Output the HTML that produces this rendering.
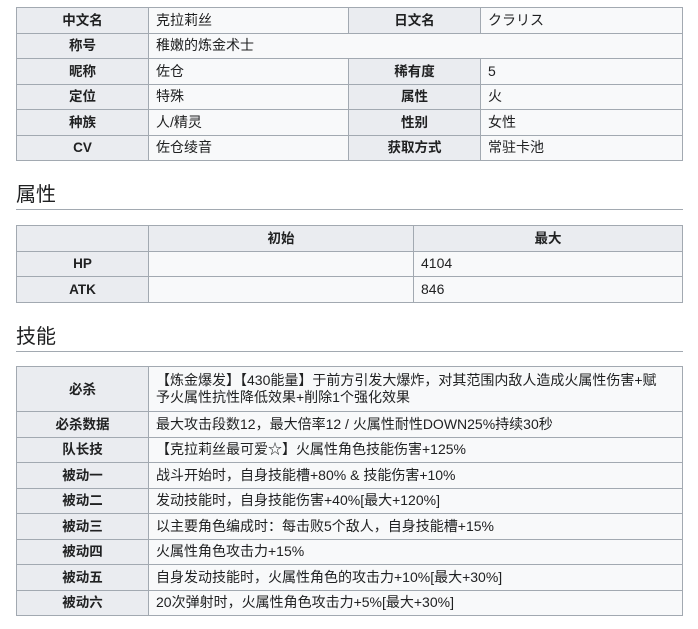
<!DOCTYPE html>
<html><head><meta charset="utf-8"><style>
body{margin:0;background:#fff;font-family:"Liberation Sans","Noto Sans CJK SC",sans-serif;font-size:14px;color:#202122;}
table{position:absolute;left:16px;width:667px;border-collapse:collapse;table-layout:fixed;background:#f8f9fa;}
td,th{border:1px solid #a2a9b1;padding:0 7px;height:24.5px;line-height:17px;}
th{background:#eaecf0;font-weight:bold;text-align:center;font-size:13.5px;}
h2{position:absolute;left:16px;width:667px;margin:0;font-weight:normal;font-size:20px;border-bottom:1px solid #a2a9b1;height:26px;line-height:24px;}
</style></head><body>
<table style="top:7px">
<colgroup><col style="width:132px"><col style="width:200px"><col style="width:132px"><col></colgroup>
<tr><th>中文名</th><td>克拉莉丝</td><th>日文名</th><td>クラリス</td></tr>
<tr><th>称号</th><td colspan="3">稚嫩的炼金术士</td></tr>
<tr><th>昵称</th><td>佐仓</td><th>稀有度</th><td>5</td></tr>
<tr><th>定位</th><td>特殊</td><th>属性</th><td>火</td></tr>
<tr><th>种族</th><td>人/精灵</td><th>性别</th><td>女性</td></tr>
<tr><th>CV</th><td>佐仓绫音</td><th>获取方式</th><td>常驻卡池</td></tr>
</table>
<h2 style="top:183px">属性</h2>
<table style="top:225px">
<colgroup><col style="width:132px"><col style="width:265px"><col></colgroup>
<tr><th></th><th>初始</th><th>最大</th></tr>
<tr><th>HP</th><td></td><td>4104</td></tr>
<tr><th>ATK</th><td></td><td>846</td></tr>
</table>
<h2 style="top:325px">技能</h2>
<table style="top:366px">
<colgroup><col style="width:132px"><col></colgroup>
<tr><th style="height:44px">必杀</th><td>【炼金爆发】【430能量】于前方引发大爆炸，对其范围内敌人造成火属性伤害+赋<br>予火属性抗性降低效果+削除1个强化效果</td></tr>
<tr><th>必杀数据</th><td>最大攻击段数12，最大倍率12 / 火属性耐性DOWN25%持续30秒</td></tr>
<tr><th>队长技</th><td>【克拉莉丝最可爱☆】火属性角色技能伤害+125%</td></tr>
<tr><th>被动一</th><td>战斗开始时，自身技能槽+80% &amp; 技能伤害+10%</td></tr>
<tr><th>被动二</th><td>发动技能时，自身技能伤害+40%[最大+120%]</td></tr>
<tr><th>被动三</th><td>以主要角色编成时：每击败5个敌人，自身技能槽+15%</td></tr>
<tr><th>被动四</th><td>火属性角色攻击力+15%</td></tr>
<tr><th>被动五</th><td>自身发动技能时，火属性角色的攻击力+10%[最大+30%]</td></tr>
<tr><th>被动六</th><td>20次弹射时，火属性角色攻击力+5%[最大+30%]</td></tr>
</table>
</body></html>
